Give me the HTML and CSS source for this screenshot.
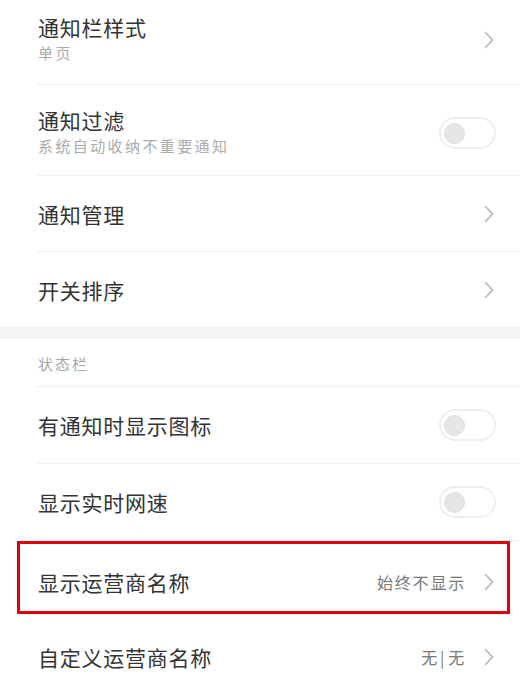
FILE: index.html
```html
<!DOCTYPE html>
<html lang="zh-CN">
<head>
<meta charset="utf-8">
<link rel="stylesheet" href="styles.css">
</head>
<body>
<div class="page">
  <div class="row row-first">
    <div class="texts">
      <div class="title">通知栏样式</div>
      <div class="sub">单页</div>
    </div>
    <svg class="chev" viewBox="0 0 10 18"><path d="M1.5 1.5 L8.5 9 L1.5 16.5" /></svg>
  </div>
  <div class="row row-second">
    <div class="texts">
      <div class="title">通知过滤</div>
      <div class="sub">系统自动收纳不重要通知</div>
    </div>
    <div class="toggle"><div class="knob"></div></div>
  </div>
  <div class="row row-short">
    <div class="title">通知管理</div>
    <svg class="chev" viewBox="0 0 10 18"><path d="M1.5 1.5 L8.5 9 L1.5 16.5" /></svg>
  </div>
  <div class="row row-short no-line">
    <div class="title">开关排序</div>
    <svg class="chev" viewBox="0 0 10 18"><path d="M1.5 1.5 L8.5 9 L1.5 16.5" /></svg>
  </div>
  <div class="band"></div>
  <div class="header">状态栏</div>
  <div class="row">
    <div class="title">有通知时显示图标</div>
    <div class="toggle"><div class="knob"></div></div>
  </div>
  <div class="row">
    <div class="title">显示实时网速</div>
    <div class="toggle"><div class="knob"></div></div>
  </div>
  <div class="row no-line highlight">
    <div class="title">显示运营商名称</div>
    <div class="right">
      <span class="value">始终不显示</span>
      <svg class="chev" viewBox="0 0 10 18"><path d="M1.5 1.5 L8.5 9 L1.5 16.5" /></svg>
    </div>
    <div class="redbox"></div>
  </div>
  <div class="row no-line">
    <div class="title">自定义运营商名称</div>
    <div class="right">
      <span class="value">无<span class="bar">|</span>无</span>
      <svg class="chev" viewBox="0 0 10 18"><path d="M1.5 1.5 L8.5 9 L1.5 16.5" /></svg>
    </div>
  </div>
</div>
</body>
</html>
```

FILE: styles.css
```css
html, body {
  margin: 0;
  padding: 0;
  background: #ffffff;
}
body {
  font-family: "Noto Sans CJK SC", "Noto Sans", sans-serif;
  width: 520px;
  height: 676px;
  overflow: hidden;
}
.page {
  display: flex;
  flex-direction: column;
}
.row {
  position: relative;
  display: flex;
  align-items: center;
  justify-content: space-between;
  margin-left: 37px;
  padding-right: 26px;
  height: 76px;
  border-bottom: 1px solid #efefef;
  box-sizing: content-box;
}
.row.no-line {
  border-bottom: none;
  height: 77px;
}
.row-first {
  height: auto;
  padding-top: 14px;
  padding-bottom: 18px;
}
.row-second {
  height: auto;
  padding-top: 22px;
  padding-bottom: 16px;
}
.row-short {
  height: 75px;
}
.row-short.no-line {
  height: 75px;
}
.texts {
  display: flex;
  flex-direction: column;
}
.title {
  font-size: 21px;
  line-height: 26px;
  letter-spacing: 0.75px;
  color: #333333;
  padding-left: 1px;
}
.sub {
  font-size: 15px;
  line-height: 26px;
  letter-spacing: 2.4px;
  color: #ababab;
  padding-left: 1px;
}
.chev {
  width: 10px;
  height: 18px;
  flex: none;
}
.chev path {
  fill: none;
  stroke: #b4b4b4;
  stroke-width: 1.5;
  stroke-linecap: round;
  stroke-linejoin: round;
}
.toggle {
  width: 50px;
  height: 28px;
  border: 2px solid #eeeeee;
  border-radius: 16px;
  background: #ffffff;
  display: flex;
  align-items: center;
  padding-left: 3px;
  box-sizing: content-box;
  margin-right: -2px;
}
.knob {
  width: 21px;
  height: 21px;
  border-radius: 50%;
  background: #e6e6e6;
  border: 1px solid #dedede;
  box-sizing: border-box;
}
.band {
  height: 12px;
  background: #f5f5f5;
}
.header {
  margin-left: 37px;
  height: 47px;
  line-height: 50px;
  border-bottom: 1px solid #efefef;
  font-size: 15px;
  letter-spacing: 2px;
  color: #a6a6a6;
  padding-left: 1px;
}
.right {
  display: flex;
  align-items: center;
  gap: 18px;
}
.value {
  font-size: 16px;
  letter-spacing: 1.8px;
  color: #777777;
}
.bar {
  margin: 0 2px 0 1px;
}
.highlight .title {
  margin-top: 4px;
}
.highlight .right {
  margin-top: 4px;
}
.redbox {
  position: absolute;
  left: -20px;
  right: 10px;
  top: 0;
  height: 73px;
  border: 3px solid #e0000e;
  box-sizing: border-box;
}
```
